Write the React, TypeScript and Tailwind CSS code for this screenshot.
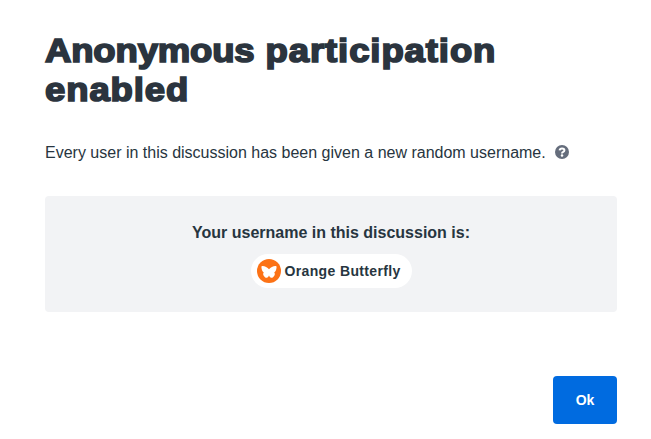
const ButterflyBadge = () => (
  <svg width="24" height="24" viewBox="0 0 24 24" className="shrink-0" aria-hidden="true">
    <circle cx="12" cy="12" r="12" fill="#fc7216" />
    <path
      fill="#fff"
      d="M12 10.200C10.400 8 7.500 6.700 5.200 6.900c-.7.1-.9.6-.8 1.200.2 2.200.7 4.400 2.400 5.400-.9.9-.8 2.100-.1 3.200.8 1.300 2 2.200 3 2 1.200-.2 1.800-1.200 2.300-2.200.5 1 1.100 2 2.300 2.200 1 .2 2.200-.7 3-2 .7-1.100.8-2.300-.1-3.200 1.700-1 2.200-3.200 2.400-5.400.1-.6-.1-1.100-.8-1.200-2.300-.2-5.200 1.100-6.800 3.300z"
    />
  </svg>
);

const HelpIcon = () => (
  <svg width="14" height="14" viewBox="0 0 14 14" className="mb-[2px] shrink-0" role="img" aria-label="Help">
    <circle cx="7" cy="7" r="7" fill="#656d7c" />
    <path d="M4.600 5.300Q4.900 3.500 7 3.500 9.400 3.500 9.400 5.200 9.400 6.200 8.200 6.900 7 7.500 7 8.500" fill="none" stroke="#fff" strokeWidth="2" />
    <circle cx="7" cy="10.500" r="1.250" fill="#fff" />
  </svg>
);

export default function App() {
  return (
    <main className="flex h-[439px] w-[651px] flex-col bg-white pt-[31px] pr-[34px] pl-[45px] font-['Liberation_Sans',Arial,sans-serif] text-[#2d3b45]">
      <h1 className="origin-left scale-x-[1.09] text-[33.5px] leading-[39px] font-bold tracking-[0.82px] text-[#2b343e] [-webkit-text-stroke:1.7px_#2b343e]">
        <span className="tracking-[-0.15px]">Anonymous</span> participation
        <br />
        enabled
      </h1>
      <p className="mt-8 flex h-6 items-center gap-[9px] text-base text-[#273540]">
        Every user in this discussion has been given a new random username.
        <HelpIcon />
      </p>
      <section className="mt-[31px] flex h-[116px] flex-col items-center rounded bg-[#f2f3f5] pt-[25px] text-[#273540]">
        <p className="text-base leading-6 font-bold">Your username in this discussion is:</p>
        <div className="mt-[9px] flex h-[34px] w-[161px] items-center gap-1 rounded-full bg-white pl-[6px] text-sm font-bold">
          <ButterflyBadge />
          <span className="tracking-[0.36px] whitespace-nowrap">Orange Butterfly</span>
        </div>
      </section>
      <button className="mt-16 h-12 w-16 self-end rounded bg-[#006be0] text-sm font-bold text-white">Ok</button>
    </main>
  );
}
